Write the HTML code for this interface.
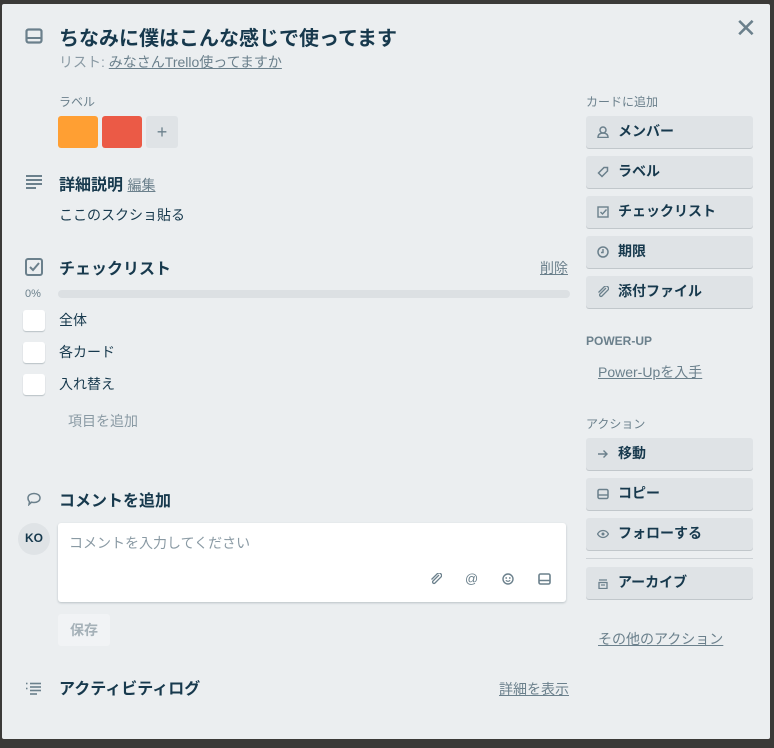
<!DOCTYPE html>
<html><head><meta charset="utf-8"><style>
*{margin:0;padding:0;box-sizing:border-box}
body{width:774px;height:748px;background:#3b3a38;position:relative;overflow:hidden;font-family:"Liberation Sans","Noto Sans CJK JP",sans-serif;color:#17394d}
.m{position:absolute;left:2px;top:4px;width:768px;height:735px;background:#ebeef0;border-radius:2px}
.a{position:absolute}
.t{font-size:14px}
.h{font-size:16px;font-weight:bold;color:#17394d}
.sm{font-size:12px;color:#6b808c}
.u{text-decoration:underline;color:#6b808c}
.btn{position:absolute;left:586px;width:167px;height:32px;background:#dfe3e6;border-radius:3px;box-shadow:0 1px 0 #c1c7cb;font-size:14px;font-weight:bold;color:#17394d;line-height:31px;padding-left:32px}
.btn svg{position:absolute;left:11px;top:10px}
.cb{position:absolute;left:23px;width:22px;height:21px;background:#fff;border-radius:3px;box-shadow:0 1px 1px #b8c0c5}
</style></head><body>
<div class="m"></div>
<svg class="a" style="left:25px;top:28px" width="18" height="16" viewBox="0 0 18 16"><rect x="1.5" y="1.5" width="15" height="13" rx="2" fill="none" stroke="#6b808c" stroke-width="2.2"/><line x1="2" y1="10" x2="16" y2="10" stroke="#6b808c" stroke-width="2"/></svg>
<div class="a" style="left:59px;top:22px;font-size:20px;font-weight:bold;color:#17394d">ちなみに僕はこんな感じで使ってます</div>
<div class="a t" style="left:59px;top:52px;color:#8a9aa4">リスト: <span class="u">みなさんTrello使ってますか</span></div>
<div class="a" style="left:735px;top:15px;font-size:26px;color:#6b808c;line-height:26px">✕</div>
<div class="a sm" style="left:59px;top:93px">ラベル</div>
<div class="a" style="left:58px;top:116px;width:40px;height:32px;background:#ff9f33;border-radius:3px"></div>
<div class="a" style="left:102px;top:116px;width:40px;height:32px;background:#eb5a46;border-radius:3px"></div>
<div class="a" style="left:146px;top:116px;width:32px;height:32px;background:#dfe3e6;border-radius:3px;color:#6b808c;text-align:center;line-height:32px;font-size:18px">+</div>
<svg class="a" style="left:26px;top:175px" width="16" height="14"><g stroke="#6b808c" stroke-width="2"><line x1="0" y1="1" x2="16" y2="1"/><line x1="0" y1="5" x2="16" y2="5"/><line x1="0" y1="9" x2="16" y2="9"/><line x1="0" y1="13" x2="10" y2="13"/></g></svg>
<div class="a h" style="left:59px;top:171px">詳細説明 <span class="u" style="font-size:14px;font-weight:normal">編集</span></div>
<div class="a t" style="left:59px;top:205px">ここのスクショ貼る</div>
<svg class="a" style="left:25px;top:258px" width="18" height="18"><rect x="1" y="1" width="16" height="16" rx="2" fill="none" stroke="#6b808c" stroke-width="2"/><path d="M5 9l3 3 6-7" fill="none" stroke="#6b808c" stroke-width="2"/></svg>
<div class="a h" style="left:59px;top:255px">チェックリスト</div>
<div class="a t u" style="left:540px;top:258px">削除</div>
<div class="a" style="left:25px;top:288px;font-size:11px;color:#6b808c">0%</div>
<div class="a" style="left:58px;top:290px;width:512px;height:8px;background:#dce0e3;border-radius:4px"></div>
<div class="cb" style="top:310px"></div><div class="a t" style="left:59px;top:310px">全体</div>
<div class="cb" style="top:342px"></div><div class="a t" style="left:59px;top:342px">各カード</div>
<div class="cb" style="top:374px"></div><div class="a t" style="left:59px;top:374px">入れ替え</div>
<div class="a t" style="left:68px;top:411px;color:#8a9aa4">項目を追加</div>
<svg class="a" style="left:26px;top:492px" width="16" height="14"><path d="M2 6c0-3 3-4.5 6-4.5s6 1.5 6 4.5-3 4.5-6 4.5c-1 0-2 0-2.5-.3L3 12.5l.5-2.8C2.5 8.8 2 7.5 2 6z" fill="none" stroke="#6b808c" stroke-width="1.5"/></svg>
<div class="a h" style="left:59px;top:487px">コメントを追加</div>
<div class="a" style="left:18px;top:523px;width:32px;height:32px;border-radius:50%;background:#dfe3e6;font-size:12px;font-weight:bold;text-align:center;line-height:30px">KO</div>
<div class="a" style="left:58px;top:523px;width:508px;height:79px;background:#fff;border-radius:3px;box-shadow:0 1px 2px #b8c0c5"></div>
<div class="a t" style="left:69px;top:533px;color:#8a9aa4">コメントを入力してください</div>
<svg class="a" style="left:430px;top:573px" width="12" height="12"><path d="M9 2L3 8a1.4 1.4 0 0 0 2 2l6-6a2.5 2.5 0 0 0-3.5-3.5L1.5 6.5" fill="none" stroke="#6b808c" stroke-width="1.3"/></svg>
<div class="a" style="left:465px;top:571px;font-size:13px;color:#6b808c">@</div>
<svg class="a" style="left:502px;top:573px" width="12" height="12"><circle cx="6" cy="6" r="5" fill="none" stroke="#6b808c" stroke-width="1.4"/><circle cx="4.2" cy="5" r=".9" fill="#6b808c"/><circle cx="7.8" cy="5" r=".9" fill="#6b808c"/><path d="M3.8 7.3q2.2 2 4.4 0" fill="none" stroke="#6b808c" stroke-width="1.1"/></svg>
<svg class="a" style="left:538px;top:573px" width="13" height="12"><rect x="1" y="1" width="11" height="10" rx="1.5" fill="none" stroke="#6b808c" stroke-width="1.6"/><line x1="1" y1="7.5" x2="12" y2="7.5" stroke="#6b808c" stroke-width="1.5"/></svg>
<div class="a" style="left:58px;top:614px;width:52px;height:32px;background:#f1f3f5;border-radius:3px;font-size:14px;font-weight:bold;color:#a5b1b8;text-align:center;line-height:32px">保存</div>
<svg class="a" style="left:25px;top:682px" width="17" height="14"><g stroke="#6b808c" stroke-width="1.6"><line x1="1" y1="1.5" x2="2.5" y2="1.5"/><line x1="1" y1="6.5" x2="2.5" y2="6.5"/><line x1="5" y1="1.5" x2="16" y2="1.5"/><line x1="5" y1="5" x2="16" y2="5"/><line x1="5" y1="8.5" x2="16" y2="8.5"/><line x1="5" y1="12" x2="12" y2="12"/></g></svg>
<div class="a h" style="left:59px;top:675px">アクティビティログ</div>
<div class="a t u" style="left:499px;top:679px">詳細を表示</div>

<div class="a sm" style="left:586px;top:93px">カードに追加</div>
<div class="btn" style="top:116px"><svg width="12" height="12"><circle cx="6" cy="4" r="3" fill="none" stroke="#6b808c" stroke-width="1.5"/><path d="M1 11.5h10c0-3-2-4.5-5-4.5s-5 1.5-5 4.5z" fill="none" stroke="#6b808c" stroke-width="1.5"/></svg>メンバー</div>
<div class="btn" style="top:156px"><svg width="12" height="12"><path d="M7 1.5h3.5v3.5L5 10.5 1.5 7z" fill="none" stroke="#6b808c" stroke-width="1.5"/></svg>ラベル</div>
<div class="btn" style="top:196px"><svg width="12" height="12"><rect x="1" y="1" width="10" height="10" fill="none" stroke="#6b808c" stroke-width="1.4"/><path d="M3.5 6l2 2 4-4.5" fill="none" stroke="#6b808c" stroke-width="1.4"/></svg>チェックリスト</div>
<div class="btn" style="top:236px"><svg width="12" height="12"><circle cx="6" cy="6" r="5" fill="none" stroke="#6b808c" stroke-width="1.5"/><path d="M6 3v3.5H4" fill="none" stroke="#6b808c" stroke-width="1.4"/></svg>期限</div>
<div class="btn" style="top:276px"><svg width="12" height="12"><path d="M9 2L3 8a1.4 1.4 0 0 0 2 2l6-6a2.5 2.5 0 0 0-3.5-3.5L1.5 6.5" fill="none" stroke="#6b808c" stroke-width="1.3"/></svg>添付ファイル</div>
<div class="a" style="left:586px;top:334px;font-size:12px;font-weight:bold;color:#6b808c">POWER-UP</div>
<div class="a t u" style="left:598px;top:362px">Power-Upを入手</div>
<div class="a sm" style="left:586px;top:415px">アクション</div>
<div class="btn" style="top:438px"><svg width="12" height="12"><path d="M1 6h9M6.5 2.5 10 6l-3.5 3.5" fill="none" stroke="#6b808c" stroke-width="1.4"/></svg>移動</div>
<div class="btn" style="top:478px"><svg width="12" height="12"><rect x="1" y="1.5" width="10" height="9" rx="1.5" fill="none" stroke="#6b808c" stroke-width="1.5"/><line x1="1" y1="7" x2="11" y2="7" stroke="#6b808c" stroke-width="1.4"/></svg>コピー</div>
<div class="btn" style="top:518px"><svg width="12" height="12"><path d="M0.5 6C2 3.5 4 2.5 6 2.5S10 3.5 11.5 6C10 8.5 8 9.5 6 9.5S2 8.5 0.5 6z" fill="none" stroke="#6b808c" stroke-width="1.3"/><circle cx="6" cy="6" r="1.5" fill="#6b808c"/></svg>フォローする</div>
<div class="a" style="left:586px;top:558px;width:167px;height:1px;background:#cdd2d6"></div>
<div class="btn" style="top:567px"><svg width="12" height="12"><path d="M2 3h8M2 5.5h8v6H2z" fill="none" stroke="#6b808c" stroke-width="1.3"/><line x1="4" y1="8" x2="8" y2="8" stroke="#6b808c" stroke-width="1.2"/></svg>アーカイブ</div>
<div class="a t u" style="left:598px;top:629px">その他のアクション</div>
</body></html>
